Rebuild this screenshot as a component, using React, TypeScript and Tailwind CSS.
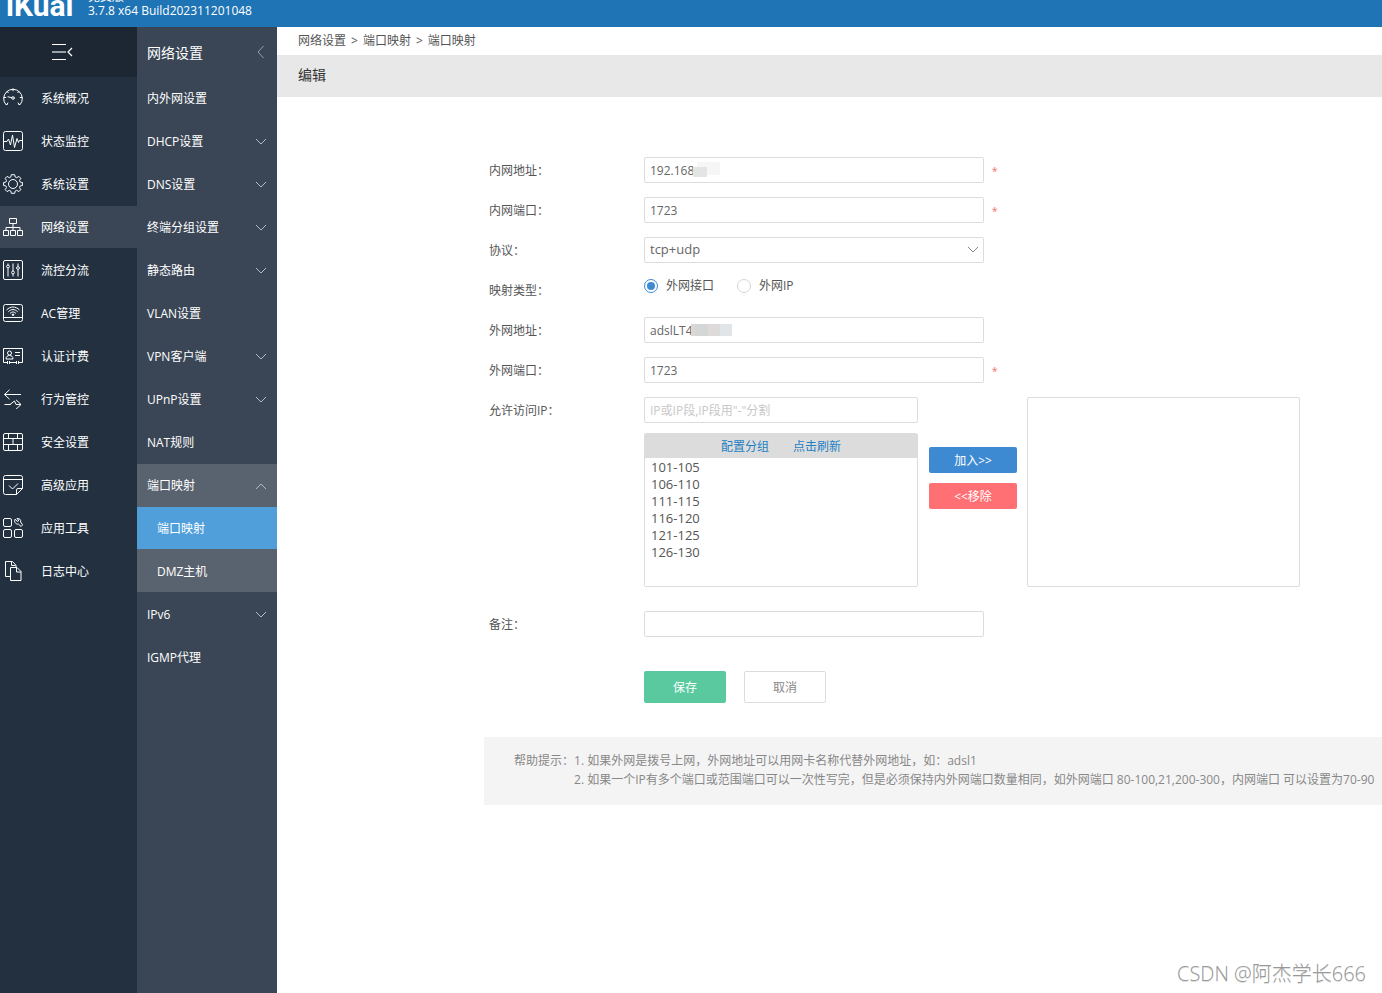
import React, { useState } from 'react';
import clsx from 'clsx';

const iconProps = {
  width: 20,
  height: 20,
  viewBox: '0 0 20 20',
  fill: 'none',
  stroke: 'currentColor',
  strokeWidth: 1,
  'aria-hidden': true,
};

const GaugeIcon = () => (
  <svg {...iconProps} strokeLinecap="round">
    <path d="M4 16.500H2.800A9.300 9.300 0 1 1 17.200 16.500H16" />
    <path d="M4 16.500l.8-1.500M16 16.500l-.8-1.500M1 9.500h1.800M19 9.500h-1.800M10 .8v2M4 3.500l1.200 1.200M16 3.500l-1.200 1.200M5 8.800l3.700.900" />
    <circle cx="10" cy="10" r="1.300" />
  </svg>
);

const ActivityIcon = () => (
  <svg {...iconProps} strokeLinejoin="round">
    <rect x=".5" y=".5" width="19" height="19" rx="2" />
    <path d="M1 10.500h3l1.500-2.500 2 6L9.500 4l2 12.500L14 7.500l1.500 4 1-2h2.500" />
  </svg>
);

const GearIcon = () => (
  <svg {...iconProps} strokeLinejoin="round">
    <circle cx="10" cy="10" r="4.500" />
    <path d="M8.300.700h3.400l.500 2.300 1.500.700 2.200-1.300 1.900 1.900-1.300 2.200.700 1.600 2.200.400v3l-2.200.400-.700 1.600 1.300 2.200-1.900 1.900-2.200-1.300-1.500.700-.500 2.300H8.300L7.800 17l-1.500-.700-2.200 1.300-1.900-1.900 1.300-2.200-.700-1.600L.600 11.500v-3l2.200-.400.700-1.600-1.300-2.200 1.900-1.900 2.200 1.300L7.800 3z" />
  </svg>
);

const NetworkIcon = () => (
  <svg {...iconProps}>
    <path d="M6.500 1.500h7v5h-7zM.5 13.500h5v5h-5zM7.500 13.500h5v5h-5zM14.500 13.500h5v5h-5zM10 7v6.500M3 13.500v-3h14v3" />
  </svg>
);

const SlidersIcon = () => (
  <svg {...iconProps}>
    <rect x=".5" y=".5" width="19" height="19" rx="1.500" />
    <path d="M5 3.500v1.500M5 8v8.500M10 3.500v7.500M10 14v2.500M15 3.500v3M15 9.500v7" />
    <circle cx="5" cy="6.500" r="1.400" />
    <circle cx="10" cy="12.500" r="1.400" />
    <circle cx="15" cy="8" r="1.400" />
  </svg>
);

const WifiIcon = () => (
  <svg {...iconProps}>
    <rect x=".5" y="1.500" width="19" height="17" rx="2" />
    <path d="M.5 14.500h19M3.500 7c4-4 9-4 13 0M5.300 8.800c3-3 6.400-3 9.400 0M7 10.500c2-2 4-2 6 0" />
    <circle cx="10" cy="11.700" r=".8" fill="currentColor" />
  </svg>
);

const IdCardIcon = () => (
  <svg {...iconProps}>
    <path d="M4.500 16.500h-4v-14h19v14h-4M6.500 16.500h7M4.500 15v3M6.500 15v3M13.500 15v3M15.500 15v3M12 6.500h5M12 9.500h5" />
    <circle cx="6.500" cy="7" r="2" />
    <path d="M3 13c0-2.500 1.500-3.500 3.500-3.500s3.500 1 3.500 3.500z" />
  </svg>
);

const SwapIcon = () => (
  <svg {...iconProps}>
    <path d="M18 5.500H1.500M6.500.800L1.500 5.500l5 4.700M1.500 15.500h6M7 15.500l4.500-3.500 1.500 3.500h5M13 10.800l5 4.700-5 4.700" />
  </svg>
);

const WallIcon = () => (
  <svg {...iconProps}>
    <rect x=".5" y="1.500" width="19" height="17" rx="1.500" />
    <path d="M.5 6.500h19M.5 12.500h19M5.500 1.500v5M14.500 1.500v5M10 6.500v6M5.500 12.500v6M14.500 12.500v6" />
  </svg>
);

const AdvancedIcon = () => (
  <svg {...iconProps} strokeLinejoin="round">
    <path d="M13.500 19.500h-11a2 2 0 0 1-2-2v-15a2 2 0 0 1 2-2h15a2 2 0 0 1 2 2v11zM13.500 19.500v-4.500q0-1.500 1.500-1.500h4.500M.5 4.500h19M6 10.500l3.500 3.500 5.500-5.500" />
  </svg>
);

const ToolsIcon = () => (
  <svg {...iconProps}>
    <rect x=".5" y=".5" width="8" height="8" rx="1.500" />
    <rect x=".5" y="11.500" width="8" height="8" rx="1.500" />
    <rect x="11.500" y="11.500" width="8" height="8" rx="1.500" />
    <path d="M12 1.200l2.200 2.100 1.200-.300.200-1.200-1.800-1.200c2.600-.6 4.500 1.200 3.800 3.400l2 2.800-1.500 1.700-2.800-2.500c-2.600.5-4.500-2-3.300-4.800z" />
  </svg>
);

const FilesIcon = () => (
  <svg {...iconProps}>
    <path d="M7.500 15.500h-5V.500h7l3.500 3.800v1.900M8.500.500v4h4M7.500 6.500H14l4 4v9H7.500zM13.500 6.500v4.500H18" />
  </svg>
);

function Chevron({ className = '' }: { className?: string }) {
  return (
    <svg width="12" height="8" viewBox="0 0 12 8" fill="none" stroke="currentColor" className={className} aria-hidden>
      <path d="M1 1l5 5 5-5" />
    </svg>
  );
}

const mainMenu = [
  { label: '系统概况', icon: GaugeIcon },
  { label: '状态监控', icon: ActivityIcon },
  { label: '系统设置', icon: GearIcon },
  { label: '网络设置', icon: NetworkIcon },
  { label: '流控分流', icon: SlidersIcon },
  { label: 'AC管理', icon: WifiIcon },
  { label: '认证计费', icon: IdCardIcon },
  { label: '行为管控', icon: SwapIcon },
  { label: '安全设置', icon: WallIcon },
  { label: '高级应用', icon: AdvancedIcon },
  { label: '应用工具', icon: ToolsIcon },
  { label: '日志中心', icon: FilesIcon },
];

type SubItem = { label: string; expandable?: boolean; children?: string[] };

const subMenu: SubItem[] = [
  { label: '内外网设置' },
  { label: 'DHCP设置', expandable: true },
  { label: 'DNS设置', expandable: true },
  { label: '终端分组设置', expandable: true },
  { label: '静态路由', expandable: true },
  { label: 'VLAN设置' },
  { label: 'VPN客户端', expandable: true },
  { label: 'UPnP设置', expandable: true },
  { label: 'NAT规则' },
  { label: '端口映射', expandable: true, children: ['端口映射', 'DMZ主机'] },
  { label: 'IPv6', expandable: true },
  { label: 'IGMP代理' },
];

const ipGroups = ['101-105', '106-110', '111-115', '116-120', '121-125', '126-130'];

const fieldClass =
  'h-[26px] rounded-xs border border-[#dcdcdc] bg-white px-[5px] text-[#666] outline-none placeholder:text-[#c8c8c8]';

function Header() {
  return (
    <header className="flex h-[27px] items-end overflow-hidden bg-[#1e74b5] pl-[6px] text-white">
      <div className="w-[82px] pb-2 font-['Roboto'] text-[30px] leading-[26px] font-bold">iKuai</div>
      <div className="pb-[9px] leading-[14px]">
        <p>免费版</p>
        <p>3.7.8 x64 Build202311201048</p>
      </div>
    </header>
  );
}

function Sidebar() {
  return (
    <nav className="w-[137px] shrink-0 bg-[#223040] text-white">
      <button type="button" aria-label="收起菜单" className="flex h-[50px] w-full items-center bg-[#1d2733] pl-[52px]">
        <svg width="21" height="18" viewBox="0 0 21 18" fill="none" stroke="currentColor" aria-hidden>
          <path d="M0 1.500h14M0 16.500h14" />
          <path d="M0 9h14" stroke="#98a0a8" strokeWidth="2" />
          <path d="M20 5l-4 4 4 4" strokeWidth="1.200" />
        </svg>
      </button>
      <ul>
        {mainMenu.map(({ label, icon: Icon }) => (
          <li key={label} className="pb-px">
            <a
              href="#"
              className={clsx('flex h-[42px] items-center gap-[18px] pl-[3px]', label === '网络设置' && 'bg-[#3a4655]')}
            >
              <Icon />
              <span className="pt-[2px]">{label}</span>
            </a>
          </li>
        ))}
      </ul>
    </nav>
  );
}

function SubSidebar() {
  return (
    <nav className="w-[140px] shrink-0 bg-[#3a4655] text-white">
      <div className="flex h-[50px] items-center justify-between pr-3 pl-[10px] text-sm">
        <span className="pt-[2px]">网络设置</span>
        <svg width="9" height="14" viewBox="0 0 9 14" fill="none" stroke="#98a0a8" aria-hidden>
          <path d="M7.500 1L2 7l5.500 6" />
        </svg>
      </div>
      <ul>
        {subMenu.map((item) => (
          <li key={item.label} className={clsx(item.children && 'bg-[#59636f]')}>
            <a href="#" className="flex h-[43px] items-center justify-between pr-[10px] pl-[10px]">
              {item.label}
              {item.expandable && <Chevron className={clsx('text-[#b4bac1]', item.children && 'rotate-180')} />}
            </a>
            {item.children?.map((child) => (
              <a
                key={child}
                href="#"
                className={clsx('mb-px flex h-[42px] items-center pt-[2px] pl-5', child === '端口映射' && 'bg-[#509fdb]')}
              >
                {child}
              </a>
            ))}
          </li>
        ))}
      </ul>
    </nav>
  );
}

function Row({ label, htmlFor, children }: { label: string; htmlFor?: string; children: React.ReactNode }) {
  return (
    <div className="flex items-start">
      <label htmlFor={htmlFor} className="h-[26px] w-[155px] shrink-0 leading-7">
        {label}
      </label>
      {children}
    </div>
  );
}

function Required() {
  return <span className="h-[26px] pl-2 text-[10px] leading-7 text-[#f26d6d]">*</span>;
}

function Radio({ id, label, checked, onChange }: { id: string; label: string; checked: boolean; onChange: () => void }) {
  return (
    <div className="flex h-[18px] items-center gap-2">
      <input
        id={id}
        type="radio"
        name="mapType"
        checked={checked}
        onChange={onChange}
        className="size-[14px] appearance-none rounded-full border border-[#d5d5d5] bg-white p-[2px] bg-clip-content checked:border-[#3e8bd3] checked:bg-[#3e8bd3]"
      />
      <label htmlFor={id}>{label}</label>
    </div>
  );
}

function PortMappingForm() {
  const [lanAddr, setLanAddr] = useState('192.168');
  const [lanPort, setLanPort] = useState('1723');
  const [protocol, setProtocol] = useState('tcp+udp');
  const [mapType, setMapType] = useState('interface');
  const [wanAddr, setWanAddr] = useState('adslLT4');
  const [wanPort, setWanPort] = useState('1723');
  const [allowIp, setAllowIp] = useState('');
  const [comment, setComment] = useState('');

  return (
    <form className="pt-[60px] pl-[212px] text-[#555]" onSubmit={(e) => e.preventDefault()}>
      <div className="flex flex-col gap-[14px]">
        <Row label="内网地址：" htmlFor="lanAddr">
          <div className="relative h-[26px]">
            <input
              id="lanAddr"
              value={lanAddr}
              onChange={(e) => setLanAddr(e.target.value)}
              className={clsx(fieldClass, 'w-[340px]')}
            />
            {/* masked part of the address */}
            <span className="absolute top-[5px] left-[53px] h-[13px] w-[23px] bg-[#f6f6f6]" />
            <span className="absolute top-[10px] left-[49px] h-[10px] w-[14px] bg-[#e3e4e4]" />
          </div>
          <Required />
        </Row>
        <Row label="内网端口：" htmlFor="lanPort">
          <input
            id="lanPort"
            value={lanPort}
            onChange={(e) => setLanPort(e.target.value)}
            className={clsx(fieldClass, 'w-[340px]')}
          />
          <Required />
        </Row>
        <Row label="协议：" htmlFor="protocol">
          <div className="relative h-[26px]">
            <select
              id="protocol"
              value={protocol}
              onChange={(e) => setProtocol(e.target.value)}
              className={clsx(fieldClass, 'w-[340px] appearance-none text-[13px]')}
            >
              <option>tcp+udp</option>
              <option>tcp</option>
              <option>udp</option>
            </select>
            <Chevron className="pointer-events-none absolute top-[9px] right-[5px] text-[#888]" />
          </div>
        </Row>
        <Row label="映射类型：">
          <div className="flex gap-[23px]">
            <Radio
              id="typeInterface"
              label="外网接口"
              checked={mapType === 'interface'}
              onChange={() => setMapType('interface')}
            />
            <Radio id="typeIp" label="外网IP" checked={mapType === 'ip'} onChange={() => setMapType('ip')} />
          </div>
        </Row>
        <Row label="外网地址：" htmlFor="wanAddr">
          <div className="relative h-[26px]">
            <input
              id="wanAddr"
              value={wanAddr}
              onChange={(e) => setWanAddr(e.target.value)}
              className={clsx(fieldClass, 'w-[340px]')}
            />
            <span className="absolute top-[7px] left-[47px] flex h-3 w-[41px]">
              <span className="w-1 bg-[#ddd8d8]" />
              <span className="w-[13px] bg-[#d5d7d7]" />
              <span className="w-3 bg-[#dfdada]" />
              <span className="w-3 bg-[#e2e5e7]" />
            </span>
          </div>
        </Row>
        <Row label="外网端口：" htmlFor="wanPort">
          <input
            id="wanPort"
            value={wanPort}
            onChange={(e) => setWanPort(e.target.value)}
            className={clsx(fieldClass, 'w-[340px]')}
          />
          <Required />
        </Row>
        <Row label="允许访问IP：" htmlFor="allowIp">
          <div className="w-[274px]">
            <input
              id="allowIp"
              value={allowIp}
              onChange={(e) => setAllowIp(e.target.value)}
              placeholder={'IP或IP段,IP段用"-"分割'}
              className={clsx(fieldClass, 'block w-full')}
            />
            <div className="mt-[10px] overflow-hidden rounded-xs border border-[#dcdcdc]">
              <div className="flex h-6 items-center justify-center gap-6 bg-[#dcdcdc] pt-[2px] text-[#1e7fc2]">
                <a href="#">配置分组</a>
                <a href="#">点击刷新</a>
              </div>
              <select
                multiple
                aria-label="IP分组"
                className="block h-32 w-full bg-white px-1 text-[13px] text-[#555] outline-none"
              >
                {ipGroups.map((group) => (
                  <option key={group} className="h-[17px] min-h-0 px-[2px] py-0 leading-[15px]">
                    {group}
                  </option>
                ))}
              </select>
            </div>
          </div>
          <div className="mx-[10px] flex w-[89px] flex-col gap-[10px] pt-[50px] pl-px text-white">
            <button type="button" className="h-[26px] rounded-xs bg-[#3d8ad2] pt-[2px]">
              加入&gt;&gt;
            </button>
            <button type="button" className="h-[26px] rounded-xs bg-[#ff7074] pt-[2px]">
              &lt;&lt;移除
            </button>
          </div>
          <select
            multiple
            aria-label="已选IP"
            className="h-[190px] w-[273px] rounded-xs border border-[#dcdcdc] bg-white outline-none"
          />
        </Row>
      </div>

      <div className="pt-6">
        <Row label="备注：" htmlFor="comment">
          <input
            id="comment"
            value={comment}
            onChange={(e) => setComment(e.target.value)}
            className={clsx(fieldClass, 'w-[340px]')}
          />
        </Row>
      </div>

      <div className="flex gap-[18px] pt-[34px] pl-[155px]">
        <button type="submit" className="h-8 w-[82px] rounded-xs bg-[#5ac99f] pt-[2px] text-white">
          保存
        </button>
        <button type="button" className="h-8 w-[82px] rounded-xs border border-[#dcdcdc] bg-white pt-[2px] text-[#888]">
          取消
        </button>
      </div>
    </form>
  );
}

function HelpTips() {
  return (
    <div className="mt-[34px] ml-[207px] flex h-[68px] overflow-hidden bg-[#f4f4f4] pt-[14px] pl-[30px] leading-[19px] whitespace-nowrap text-[#888]">
      <span>帮助提示：</span>
      <div>
        <p>1. 如果外网是拨号上网，外网地址可以用网卡名称代替外网地址，如：adsl1</p>
        <p>
          2. 如果一个IP有多个端口或范围端口可以一次性写完，但是必须保持内外网端口数量相同，如外网端口
          80-100,21,200-300，内网端口 可以设置为70-90
        </p>
      </div>
    </div>
  );
}

export default function App() {
  return (
    <div
      lang="zh-CN"
      className="relative flex min-h-screen flex-col overflow-hidden bg-white font-['Open_Sans','Noto_Sans_CJK_SC',sans-serif] text-xs"
    >
      <Header />
      <div className="flex flex-1">
        <Sidebar />
        <SubSidebar />
        <main className="min-w-0 flex-1">
          <div className="flex h-7 items-center gap-[5px] pl-[21px] text-[#555]">
            <a href="#">网络设置</a>
            <span>&gt;</span>
            <a href="#">端口映射</a>
            <span>&gt;</span>
            <a href="#">端口映射</a>
          </div>
          <h1 className="flex h-[42px] items-center bg-[#e8e8e8] pb-[2px] pl-[21px] text-sm text-[#333]">编辑</h1>
          <PortMappingForm />
          <HelpTips />
        </main>
      </div>
      <span className="absolute right-4 bottom-[5px] font-['Open_Sans','Noto_Sans_CJK_SC',sans-serif] text-xl font-light text-[#999] text-shadow-2xs">
        CSDN @阿杰学长666
      </span>
    </div>
  );
}
